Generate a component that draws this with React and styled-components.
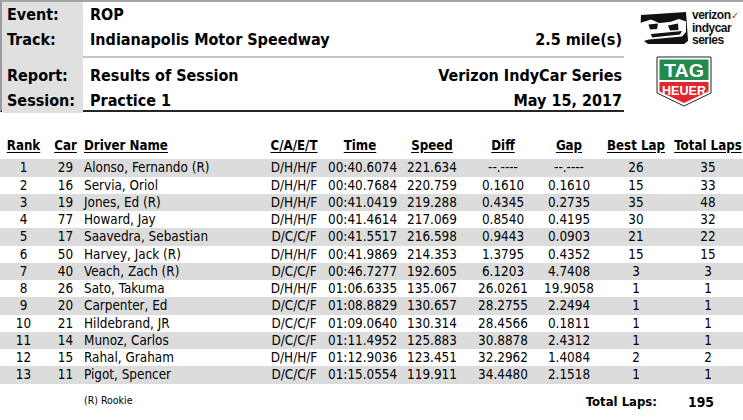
import React from 'react';
import styled, { createGlobalStyle } from 'styled-components';

const results = [
  [1, 29, 'Alonso, Fernando (R)', 'D/H/H/F', '00:40.6074', '221.634', '--.----', '--.----', 26, 35],
  [2, 16, 'Servia, Oriol', 'D/H/H/F', '00:40.7684', '220.759', '0.1610', '0.1610', 15, 33],
  [3, 19, 'Jones, Ed (R)', 'D/H/H/F', '00:41.0419', '219.288', '0.4345', '0.2735', 35, 48],
  [4, 77, 'Howard, Jay', 'D/H/H/F', '00:41.4614', '217.069', '0.8540', '0.4195', 30, 32],
  [5, 17, 'Saavedra, Sebastian', 'D/C/C/F', '00:41.5517', '216.598', '0.9443', '0.0903', 21, 22],
  [6, 50, 'Harvey, Jack (R)', 'D/H/H/F', '00:41.9869', '214.353', '1.3795', '0.4352', 15, 15],
  [7, 40, 'Veach, Zach (R)', 'D/C/C/F', '00:46.7277', '192.605', '6.1203', '4.7408', 3, 3],
  [8, 26, 'Sato, Takuma', 'D/H/H/F', '01:06.6335', '135.067', '26.0261', '19.9058', 1, 1],
  [9, 20, 'Carpenter, Ed', 'D/C/C/F', '01:08.8829', '130.657', '28.2755', '2.2494', 1, 1],
  [10, 21, 'Hildebrand, JR', 'D/C/C/F', '01:09.0640', '130.314', '28.4566', '0.1811', 1, 1],
  [11, 14, 'Munoz, Carlos', 'D/C/C/F', '01:11.4952', '125.883', '30.8878', '2.4312', 1, 1],
  [12, 15, 'Rahal, Graham', 'D/H/H/F', '01:12.9036', '123.451', '32.2962', '1.4084', 2, 2],
  [13, 11, 'Pigot, Spencer', 'D/C/C/F', '01:15.0554', '119.911', '34.4480', '2.1518', 1, 1],
];

const headings = ['Rank', 'Car', 'Driver Name', 'C/A/E/T', 'Time', 'Speed', 'Diff', 'Gap', 'Best Lap', 'Total Laps'];

const GlobalStyle = createGlobalStyle`
  body {
    margin: 0;
    background: #fff;
    color: #000;
    font-family: "DejaVu Sans Condensed", "DejaVu Sans", Tahoma, sans-serif;
    overflow: hidden;
  }
`;

const Page = styled.div`
  width: 743px;
  height: 420px;
`;

const Header = styled.header`
  display: flex;
  border-top: 2px solid #a4a4a4;
`;

const InfoPanel = styled.div`
  width: 622px;
  border-left: 2px solid #9c9c9c;
  border-bottom: 2px solid #262626;
`;

const InfoRow = styled.div`
  display: grid;
  grid-template-columns: 81px 1fr;
  height: ${({ $h }) => $h}px;
`;

const Label = styled.div`
  background: #e0e0e0;
  padding: ${({ $pad }) => $pad || 0}px 0 0 5px;
  font-size: 16px;
  font-weight: bold;
  line-height: 25px;
`;

const Value = styled.div`
  display: flex;
  justify-content: space-between;
  padding: ${({ $pad }) => $pad || 0}px 2px 0 7px;
  border-top: ${({ $rule }) => ($rule ? '2px solid #c4c4c4' : 'none')};
  font-size: 16px;
  font-weight: bold;
  line-height: 25px;
`;

const Logos = styled.div`
  flex: 1;
  display: flex;
  flex-direction: column;
  align-items: center;
  padding-top: 7px;
  gap: 10px;
`;

const IndyLogo = styled.div`
  display: flex;
  align-items: center;
  gap: 3px;
  margin-left: 10px;
`;

const IndyWords = styled.div`
  display: flex;
  flex-direction: column;
  font-family: "Liberation Sans", Arial, sans-serif;
  font-weight: bold;
  font-size: 12px;
  line-height: 12px;
  letter-spacing: -0.5px;
  color: #111;
`;

const Check = styled.span`
  color: #e0202a;
  font-weight: normal;
  font-size: 10px;
`;

const Table = styled.div`
  margin-top: 24px;
`;

const Row = styled.div`
  display: grid;
  grid-template-columns: 47px 37px 176px 68px 64px 80px 62px 70px 64px 75px;
  height: ${({ $head }) => ($head ? 18 : 17.25)}px;
  margin-bottom: ${({ $head }) => ($head ? 5.25 : 0)}px;
  align-items: center;
  background: ${({ $shade }) => ($shade ? '#dcdcdc' : 'transparent')};
  font-size: ${({ $head }) => ($head ? 13.2 : 13.4)}px;
  font-weight: ${({ $head }) => ($head ? 'bold' : 'normal')};
  text-decoration: ${({ $head }) => ($head ? 'underline' : 'none')};
  text-underline-offset: 2px;
  white-space: nowrap;
`;

const Cell = styled.div`
  text-align: ${({ $left }) => ($left ? 'left' : 'center')};
  padding-left: ${({ $shift }) => $shift || 0}px;
`;

const Footer = styled.div`
  display: flex;
  align-items: center;
  margin-top: 8px;
  height: 20px;
`;

const Note = styled.div`
  margin-left: 84px;
  margin-top: -4px;
  font-size: 10.5px;
`;

const TotalLabel = styled.div`
  margin-left: auto;
  font-size: 13px;
  font-weight: bold;
`;

const TotalValue = styled.div`
  width: 55px;
  margin-left: 31px;
  font-size: 13.8px;
  font-weight: bold;
`;

const IndyMark = () => (
  <svg width="50" height="34" viewBox="0 0 50 34">
    <path d="M2 4 L47 1 L49 30 L45 33 L9 33 L1 27 Z" fill="#111" />
    <path d="M1 12 L12 8.5 L20 12 L31 11 L40 8 L47 10.5 L47 21 L43 25.5 L10 28.5 L1 31 Z" fill="#fff" />
    <path d="M9.5 13.5 L19 12.5 L18 18 L11 18.5 Z" fill="#111" />
    <path d="M29 14.5 L39 12.5 L39.5 19 L31 19.5 Z" fill="#111" />
    <path d="M12 23 L43 20 L41 23.5 L13 26.5 Z" fill="#111" />
  </svg>
);

const TagShield = () => (
  <svg width="56" height="51" viewBox="0 0 56 51">
    <path d="M1 1 H55 V37 L28 50 L1 37 Z" fill="#fff" stroke="#222" strokeWidth="1" />
    <path d="M3.5 3.5 H52.5 V24 H3.5 Z" fill="#23894f" />
    <path d="M3.5 26 H52.5 V35.5 L28 47 L3.5 35.5 Z" fill="#e0262e" />
    <text x="28" y="21" textAnchor="middle" fill="#fff" fontFamily="Liberation Sans, Arial, sans-serif" fontWeight="bold" fontSize="18" textLength="40" lengthAdjust="spacingAndGlyphs">TAG</text>
    <text x="28" y="38.5" textAnchor="middle" fill="#fff" fontFamily="Liberation Sans Narrow, Liberation Sans, sans-serif" fontWeight="bold" fontSize="13" textLength="44" lengthAdjust="spacingAndGlyphs">HEUER</text>
  </svg>
);

const App = () => {
  return (
    <Page>
      <GlobalStyle />
      <Header>
        <InfoPanel>
          <InfoRow $h={25}>
            <Label>Event:</Label>
            <Value>ROP</Value>
          </InfoRow>
          <InfoRow $h={29}>
            <Label>Track:</Label>
            <Value>
              <span>Indianapolis Motor Speedway</span>
              <span>2.5 mile(s)</span>
            </Value>
          </InfoRow>
          <InfoRow $h={32}>
            <Label $pad={7}>Report:</Label>
            <Value $rule $pad={5}>
              <span>Results of Session</span>
              <span>Verizon IndyCar Series</span>
            </Value>
          </InfoRow>
          <InfoRow $h={22}>
            <Label>Session:</Label>
            <Value>
              <span>Practice 1</span>
              <span>May 15, 2017</span>
            </Value>
          </InfoRow>
        </InfoPanel>
        <Logos>
          <IndyLogo>
            <IndyMark />
            <IndyWords>
              <span>
                verizon<Check>✓</Check>
              </span>
              <span>indycar</span>
              <span>series</span>
            </IndyWords>
          </IndyLogo>
          <TagShield />
        </Logos>
      </Header>

      <Table>
        <Row $head>
          {headings.map((h, i) => (
            <Cell key={h} $left={i === 2} $shift={i === 9 ? 5 : 0}>
              {h}
            </Cell>
          ))}
        </Row>
        {results.map((r, idx) => (
          <Row key={r[0]} $shade={idx % 2 === 0}>
            {r.map((v, i) => (
              <Cell key={i} $left={i === 2} $shift={i === 9 ? 5 : 0}>
                {v}
              </Cell>
            ))}
          </Row>
        ))}
      </Table>

      <Footer>
        <Note>(R) Rookie</Note>
        <TotalLabel>Total Laps:</TotalLabel>
        <TotalValue>195</TotalValue>
      </Footer>
    </Page>
  );
};

export default App;
